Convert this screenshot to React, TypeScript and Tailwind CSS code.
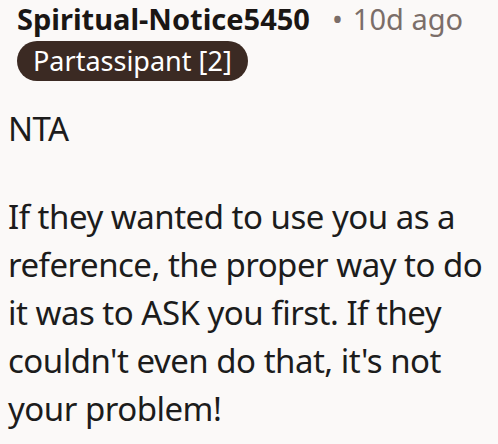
export default function App() {
  return (
    <div
      className="min-h-[444px] w-[498px] bg-[#fbf9f8] pl-2 text-[#1c1c1c]"
      style={{ fontFamily: '"Noto Sans", "Open Sans", sans-serif' }}
    >
      <div className="pl-[9px]">
        <div className="flex items-baseline gap-[22px] leading-[38px]">
          <span className="text-[29px] font-bold text-[#1a1614]">Spiritual-Notice5450</span>
          <span className="text-[29px] text-[#7b6e69]">
            <span className="mr-[10px]">•</span>10d ago
          </span>
        </div>
        <span className="mt-[3px] inline-flex h-10 items-center rounded-full bg-[#3b2a23] px-4 text-[27px] text-white">
          Partassipant [2]
        </span>
      </div>
      <div className="mt-[24px] text-[33px] leading-[48px] tracking-[-0.5px]">
        <p>NTA</p>
        <p className="mt-10">
          If they wanted to use you as a reference, the proper way to do it was to ASK you first. If they
          couldn't even do that, it's not your problem!
        </p>
      </div>
    </div>
  );
}
